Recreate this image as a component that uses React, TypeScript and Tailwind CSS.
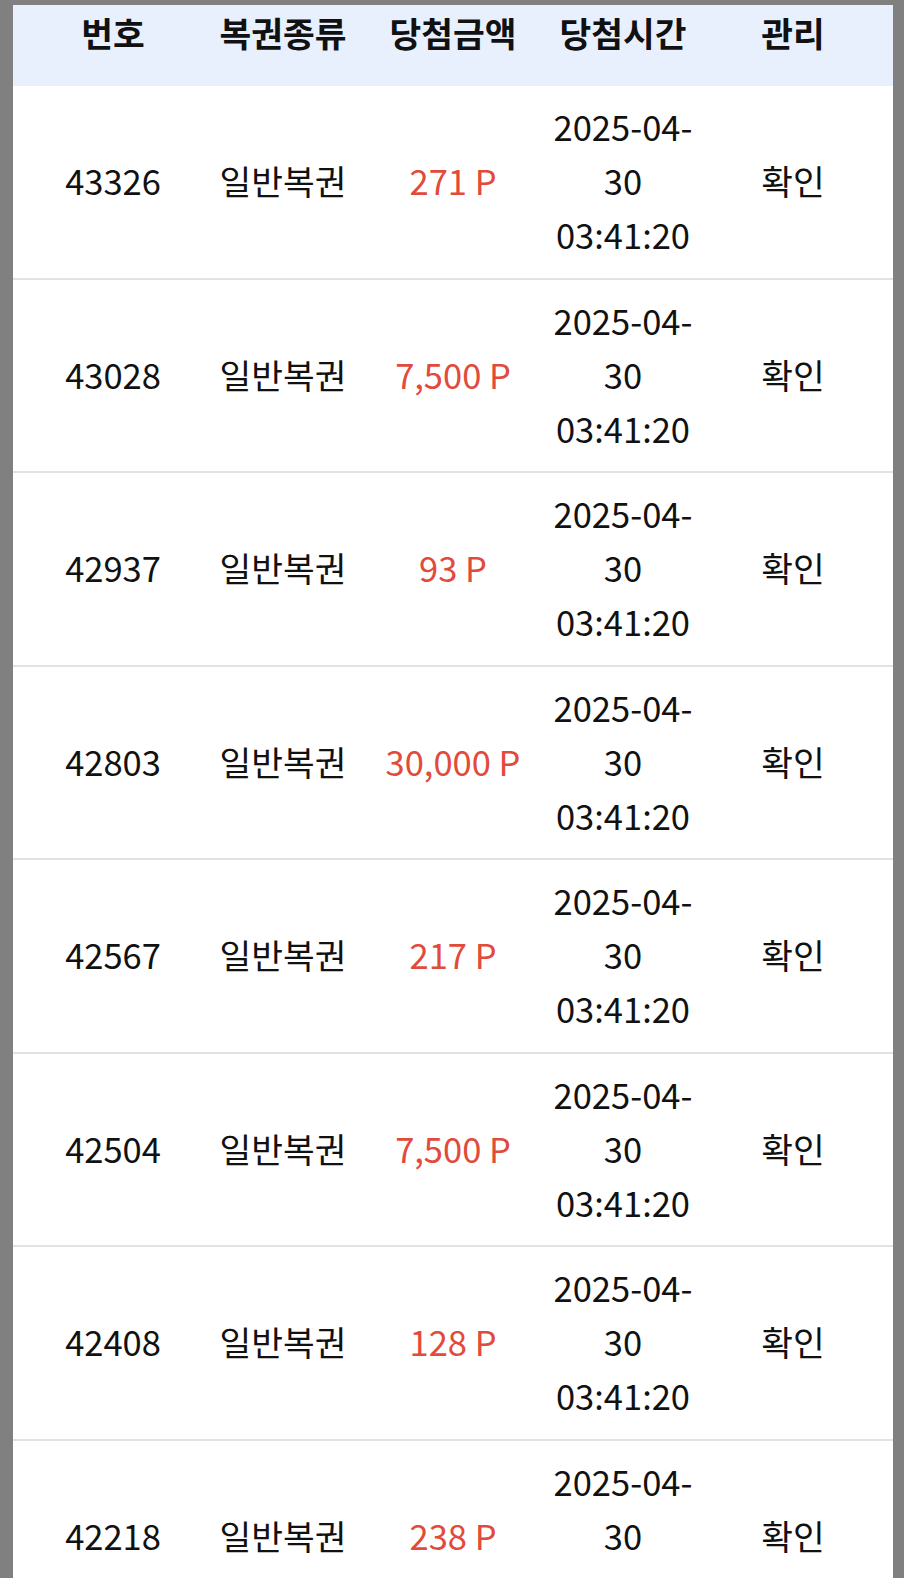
const ROWS = [
  { id: "43326", amount: "271 P" },
  { id: "43028", amount: "7,500 P" },
  { id: "42937", amount: "93 P" },
  { id: "42803", amount: "30,000 P" },
  { id: "42567", amount: "217 P" },
  { id: "42504", amount: "7,500 P" },
  { id: "42408", amount: "128 P" },
  { id: "42218", amount: "238 P" },
];

const HEADERS = ["번호", "복권종류", "당첨금액", "당첨시간", "관리"];

export default function App() {
  return (
    <div
      className="min-h-screen bg-[#808080] pl-[13px] pr-[11px] pt-[5px]"
      style={{ fontFamily: '"Noto Sans CJK KR", "Noto Sans", sans-serif' }}
    >
      <div className="bg-white text-[34.5px] text-[#111]">
        <div className="grid h-[81px] grid-cols-5 bg-[#e8f0fe] px-[15px] pt-[5px]">
          {HEADERS.map((h) => (
            <div key={h} className="text-center font-bold leading-[44px]">
              {h}
            </div>
          ))}
        </div>

        {ROWS.map((r) => (
          <div
            key={r.id}
            className="grid grid-cols-5 items-center border-b-2 border-[#e2e2e2] px-[15px] pt-[13px] pb-[16.5px] leading-[54px]"
          >
            <div className="text-center">{r.id}</div>
            <div className="text-center">일반복권</div>
            <div className="text-center text-[#e24a3b]">{r.amount}</div>
            <div className="flex flex-col items-center">
              <span>2025-04-</span>
              <span>30</span>
              <span>03:41:20</span>
            </div>
            <div className="text-center">확인</div>
          </div>
        ))}
      </div>
    </div>
  );
}
